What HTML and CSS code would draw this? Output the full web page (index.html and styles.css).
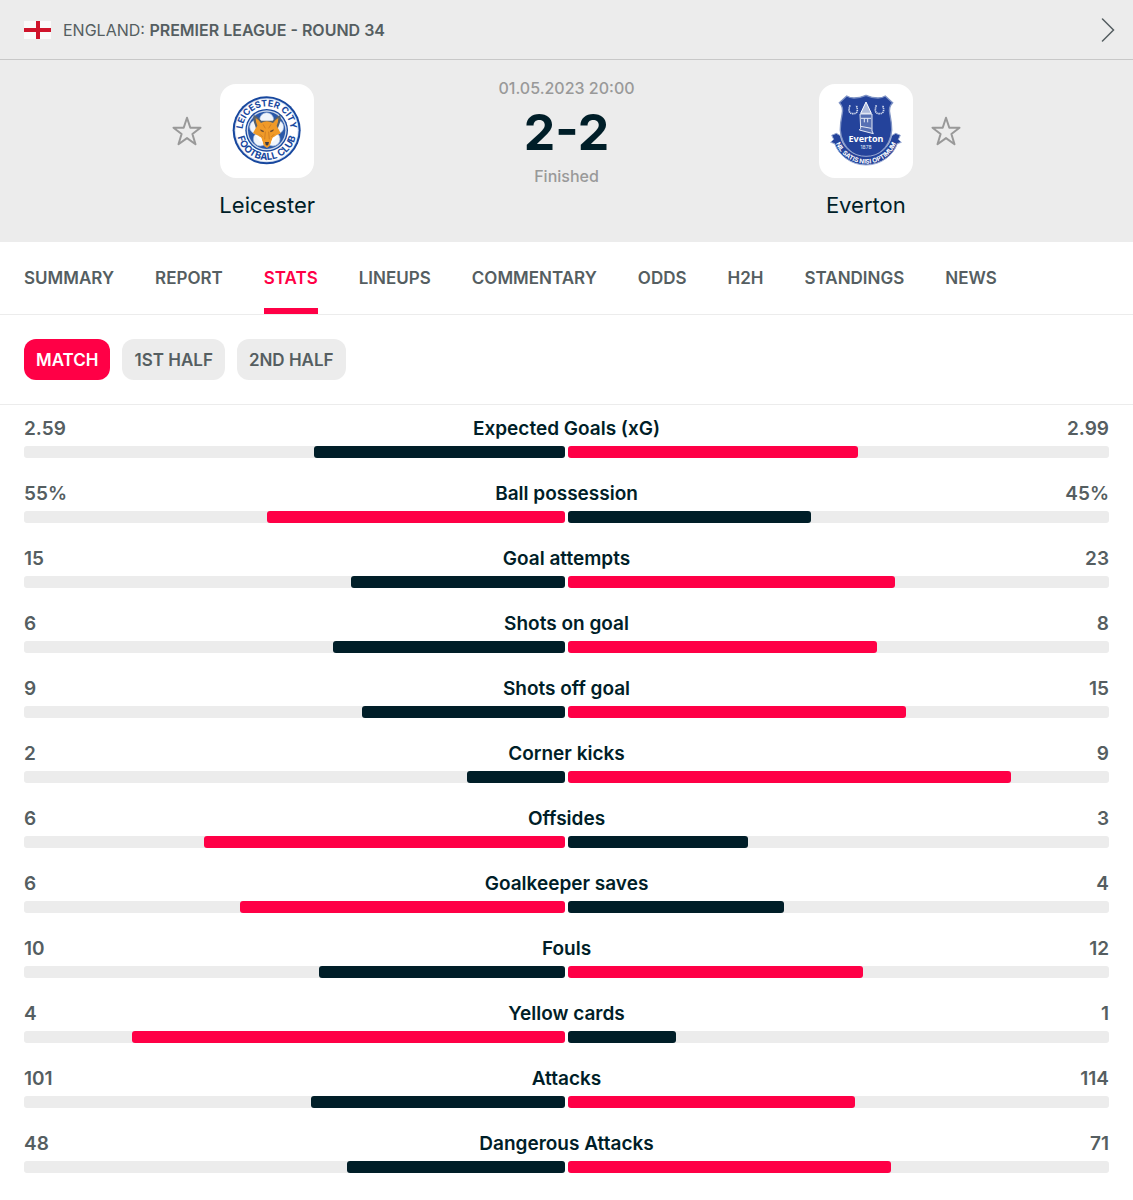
FILE: index.html
```html
<!DOCTYPE html>
<html lang="en">
<head>
<meta charset="utf-8">
<meta name="viewport" content="width=device-width, initial-scale=1">
<title>Leicester 2-2 Everton | Stats</title>
<link rel="stylesheet" href="styles.css">
</head>
<body>
<header class="league">
  <svg class="flag" viewBox="0 0 27 18" aria-hidden="true"><path fill="#fafafa" d="M0 0h27v18H0z"/><path fill="#cf142b" d="M12 0h4v18h-4zM0 7h27v4H0z"/></svg>
  <p class="league-name">ENGLAND: <a href="#league">PREMIER LEAGUE - ROUND 34</a></p>
  <button class="icon-button league-next" aria-label="Next">
    <svg class="chevron" viewBox="0 0 14 24" aria-hidden="true"><path d="M1.500 1l11 11-11 11"/></svg>
  </button>
</header>

<section class="match">
  <div class="team">
    <button class="icon-button" aria-label="Follow Leicester">
      <svg class="star" viewBox="0 0 30 30" aria-hidden="true"><path d="M15 1.800l3.300 9.900h10.200l-8.100 6.300 3.100 10.200-8.500-6.100-8.500 6.100L9.600 18 1.500 11.700h10.200z"/></svg>
    </button>
    <a class="crest" href="#leicester" aria-label="Leicester">
      <svg viewBox="0 0 282 282" aria-hidden="true">
        <defs>
          <path id="lei-top" d="M68 150V139a72 72 0 0 1 144 0V150"/>
          <path id="lei-bottom" d="M51 130V139a89 89 0 0 0 178 0V130"/>
        </defs>
        <circle cx="140" cy="139" r="102" fill="#17479e"/>
        <circle cx="140" cy="139" r="96" fill="#d5e0f2"/>
        <circle cx="140" cy="139" r="93" fill="#fff"/>
        <circle cx="140" cy="139" r="64" fill="#17479e"/>
        <circle cx="140" cy="139" r="60" fill="#c9d6ea"/>
        <circle cx="140" cy="139" r="56" fill="#2a58a8"/>
        <g fill="#f1f5fb" stroke="#9fb6dc" stroke-width="2">
          <circle cx="140" cy="107" r="21"/>
          <circle cx="170" cy="129" r="21"/>
          <circle cx="159" cy="165" r="21"/>
          <circle cx="121" cy="165" r="21"/>
          <circle cx="110" cy="129" r="21"/>
        </g>
        <path fill="#54616f" d="M101 93q14 5 23 17h34q10-12 23-17 3 17-4 31l-5 13H109l-4-13q-7-14-4-31z"/>
        <path fill="#f09a28" d="M107 102q9 5 16 15 17-10 36 0 7-10 16-15 0 13-5 24 8 13 12 22-15 5-23 13l-10 25-8 6-9-6-9-25q-8-8-24-13 4-10 13-23-5-10-5-23z"/>
        <path fill="#fff" d="M106 153l18 8 5 17q-14-8-23-25zm70 0l-18 8-6 17q14-8 24-25z"/>
        <path fill="#6a4a30" d="M121 136l11 5-2 4-8-4zm40 0l-11 5 2 4 8-4z"/>
        <path fill="#3d3e46" d="M135 174h12l-2 8-4 3-4-3z"/>
        <path fill="none" stroke="#c0701f" stroke-width="2" d="M136 143l-2 23m12-23l2 23M129 121l7 12m17-12l-7 12M120 151l8 8m34-8l-8 8"/>
        <text class="crest-ring"><textPath href="#lei-top" startOffset="50%">LEICESTER CITY</textPath></text>
        <text class="crest-ring crest-ring-large"><textPath href="#lei-bottom" startOffset="50%">FOOTBALL CLUB</textPath></text>
      </svg>
    </a>
    <a class="team-name" href="#leicester">Leicester</a>
  </div>

  <div class="result">
    <time class="muted" datetime="2023-05-01T20:00">01.05.2023 20:00</time>
    <strong class="score">2-2</strong>
    <span class="muted">Finished</span>
  </div>

  <div class="team team-away">
    <button class="icon-button" aria-label="Follow Everton">
      <svg class="star" viewBox="0 0 30 30" aria-hidden="true"><path d="M15 1.800l3.300 9.900h10.200l-8.100 6.300 3.100 10.200-8.500-6.100-8.500 6.100L9.600 18 1.500 11.700h10.200z"/></svg>
    </button>
    <a class="crest" href="#everton" aria-label="Everton">
      <svg viewBox="0 0 282 282" aria-hidden="true">
        <defs><path id="eve-ribbon" d="M46 165a98 98 0 0 0 190 0"/></defs>
        <path fill="#24439b" stroke="#8195c6" stroke-width="4" d="M83 36q10 6 22 6 18 0 36-8 18 8 36 8 12 0 22-6l22 20q-14 14-8 36l4 25q6 42-18 73-20 24-58 38-38-14-58-38-24-31-18-73l4-25q6-22-8-36z"/>
        <path fill="none" stroke="#d5ddef" stroke-width="5" stroke-dasharray="4 2" d="M93 64q-9 25 10 25 18 0 9-25M172 64q-9 25 9 25 19 0 10-25"/>
        <path fill="#aebbdd" stroke="#fff" stroke-width="3" d="M141 54l-16 34h32z"/>
        <path fill="#5770b3" stroke="#e4e9f5" stroke-width="3" d="M123 90h36v51l4 8-42-11 4-5z"/>
        <path fill="none" stroke="#e4e9f5" stroke-width="3" d="M126 103h30M125 127l32 6M136 103v12m10-12v12"/>
        <path fill="#24439b" stroke="#9aaad3" stroke-width="3" d="M38 154l14-6 12 7q5 27 26 44 22 18 51 18t51-18q21-17 26-44l12-7 14 6-6 12 9 9-12 4q-10 27-33 44-27 20-61 20t-61-20q-23-17-33-44l-12-4 9-9z"/>
        <text class="crest-name" x="141" y="173">Everton</text>
        <text class="crest-year" x="141" y="196">1878</text>
        <text class="crest-motto"><textPath href="#eve-ribbon" startOffset="50%">NIL SATIS NISI OPTIMUM</textPath></text>
      </svg>
    </a>
    <a class="team-name" href="#everton">Everton</a>
  </div>
</section>

<nav class="tabs" aria-label="Match sections">
  <a class="tab" href="#summary">SUMMARY</a>
  <a class="tab" href="#report">REPORT</a>
  <a class="tab tab-active" href="#stats" aria-current="page">STATS</a>
  <a class="tab" href="#lineups">LINEUPS</a>
  <a class="tab" href="#commentary">COMMENTARY</a>
  <a class="tab" href="#odds">ODDS</a>
  <a class="tab" href="#h2h">H2H</a>
  <a class="tab" href="#standings">STANDINGS</a>
  <a class="tab" href="#news">NEWS</a>
</nav>

<div class="periods">
  <button class="period period-active" aria-pressed="true">MATCH</button>
  <button class="period" aria-pressed="false">1ST HALF</button>
  <button class="period" aria-pressed="false">2ND HALF</button>
</div>

<main class="stats">
  <div class="stat">
    <div class="stat-text"><span>2.59</span><span class="stat-label">Expected Goals (xG)</span><span>2.99</span></div>
    <div class="bars"><div class="bar bar-home"><div class="fill" style="width:46.4%"></div></div><div class="bar"><div class="fill fill-lead" style="width:53.6%"></div></div></div>
  </div>
  <div class="stat">
    <div class="stat-text"><span>55%</span><span class="stat-label">Ball possession</span><span>45%</span></div>
    <div class="bars"><div class="bar bar-home"><div class="fill fill-lead" style="width:55%"></div></div><div class="bar"><div class="fill" style="width:45%"></div></div></div>
  </div>
  <div class="stat">
    <div class="stat-text"><span>15</span><span class="stat-label">Goal attempts</span><span>23</span></div>
    <div class="bars"><div class="bar bar-home"><div class="fill" style="width:39.5%"></div></div><div class="bar"><div class="fill fill-lead" style="width:60.5%"></div></div></div>
  </div>
  <div class="stat">
    <div class="stat-text"><span>6</span><span class="stat-label">Shots on goal</span><span>8</span></div>
    <div class="bars"><div class="bar bar-home"><div class="fill" style="width:42.9%"></div></div><div class="bar"><div class="fill fill-lead" style="width:57.1%"></div></div></div>
  </div>
  <div class="stat">
    <div class="stat-text"><span>9</span><span class="stat-label">Shots off goal</span><span>15</span></div>
    <div class="bars"><div class="bar bar-home"><div class="fill" style="width:37.5%"></div></div><div class="bar"><div class="fill fill-lead" style="width:62.5%"></div></div></div>
  </div>
  <div class="stat">
    <div class="stat-text"><span>2</span><span class="stat-label">Corner kicks</span><span>9</span></div>
    <div class="bars"><div class="bar bar-home"><div class="fill" style="width:18.2%"></div></div><div class="bar"><div class="fill fill-lead" style="width:81.8%"></div></div></div>
  </div>
  <div class="stat">
    <div class="stat-text"><span>6</span><span class="stat-label">Offsides</span><span>3</span></div>
    <div class="bars"><div class="bar bar-home"><div class="fill fill-lead" style="width:66.7%"></div></div><div class="bar"><div class="fill" style="width:33.3%"></div></div></div>
  </div>
  <div class="stat">
    <div class="stat-text"><span>6</span><span class="stat-label">Goalkeeper saves</span><span>4</span></div>
    <div class="bars"><div class="bar bar-home"><div class="fill fill-lead" style="width:60%"></div></div><div class="bar"><div class="fill" style="width:40%"></div></div></div>
  </div>
  <div class="stat">
    <div class="stat-text"><span>10</span><span class="stat-label">Fouls</span><span>12</span></div>
    <div class="bars"><div class="bar bar-home"><div class="fill" style="width:45.5%"></div></div><div class="bar"><div class="fill fill-lead" style="width:54.5%"></div></div></div>
  </div>
  <div class="stat">
    <div class="stat-text"><span>4</span><span class="stat-label">Yellow cards</span><span>1</span></div>
    <div class="bars"><div class="bar bar-home"><div class="fill fill-lead" style="width:80%"></div></div><div class="bar"><div class="fill" style="width:20%"></div></div></div>
  </div>
  <div class="stat">
    <div class="stat-text"><span>101</span><span class="stat-label">Attacks</span><span>114</span></div>
    <div class="bars"><div class="bar bar-home"><div class="fill" style="width:47%"></div></div><div class="bar"><div class="fill fill-lead" style="width:53%"></div></div></div>
  </div>
  <div class="stat">
    <div class="stat-text"><span>48</span><span class="stat-label">Dangerous Attacks</span><span>71</span></div>
    <div class="bars"><div class="bar bar-home"><div class="fill" style="width:40.3%"></div></div><div class="bar"><div class="fill fill-lead" style="width:59.7%"></div></div></div>
  </div>
</main>
</body>
</html>
```

FILE: styles.css
```css
* { box-sizing: border-box; }

body {
  margin: 0;
  background: #fff;
  color: #555e61;
  font-family: Inter, "Liberation Sans", sans-serif;
  font-size: 16px;
  line-height: 20px;
}

a { color: inherit; text-decoration: none; }

.icon-button {
  display: flex;
  padding: 0;
  border: 0;
  background: none;
  cursor: pointer;
}

/* League bar */
.league {
  display: flex;
  align-items: center;
  gap: 12px;
  height: 60px;
  padding: 0 18px 0 24px;
  background: #ececec;
  border-bottom: 1px solid #c8c8c8;
}
.flag { width: 27px; height: 18px; }
.league-name { margin: 0; }
.league-name a { font-weight: 600; }
.league-next { margin-left: auto; }
.chevron {
  width: 14px;
  height: 24px;
  fill: none;
  stroke: #555e61;
  stroke-width: 1.500;
  stroke-linecap: round;
}

/* Teams and score */
.match {
  display: flex;
  justify-content: space-between;
  align-items: flex-start;
  padding: 18px 15.2% 23px;
  background: #ececec;
}
.team {
  display: grid;
  grid-template-columns: 30px 94px;
  column-gap: 18px;
  row-gap: 13px;
  align-items: center;
  padding-top: 6px;
}
.team-away { grid-template-columns: 94px 30px; }
.team-away .icon-button { grid-column: 2; grid-row: 1; }
.team-away .crest { grid-column: 1; grid-row: 1; }
.star {
  width: 30px;
  height: 30px;
  fill: none;
  stroke: #999;
  stroke-width: 2;
  stroke-linejoin: round;
}
.crest {
  display: flex;
  height: 94px;
  border-radius: 16px;
  background: #fff;
}
.team-name {
  grid-column: 2;
  justify-self: center;
  color: #001e28;
  font-size: 22px;
  line-height: 28px;
  white-space: nowrap;
}
.team-away .team-name { grid-column: 1; }

.crest-ring { fill: #17479e; font-size: 27px; font-weight: 700; text-anchor: middle; }
.crest-ring-large { font-size: 29px; }
.crest-name { fill: #fff; font-family: "Noto Sans", sans-serif; font-size: 27px; font-weight: 700; text-anchor: middle; }
.crest-year { fill: #dfe5f3; font-size: 15px; text-anchor: middle; }
.crest-motto { fill: #fff; font-size: 19px; font-weight: 700; text-anchor: middle; }

.result {
  display: flex;
  flex-direction: column;
  align-items: center;
  gap: 10px;
}
.muted { color: #999; font-weight: 500; }
.score { color: #001e28; font-size: 50px; font-weight: 700; line-height: 48px; }

/* Section tabs */
.tabs {
  display: flex;
  gap: 41px;
  padding: 0 24px;
  border-bottom: 1px solid #ececec;
}
.tab {
  padding: 26px 0 20px;
  border-bottom: 6px solid transparent;
  font-size: 17px;
  font-weight: 600;
}
.tab-active {
  color: #ff0046;
  background: linear-gradient(#ff0046, #ff0046) bottom / 100% 6px no-repeat border-box;
}

/* Period filter */
.periods {
  display: flex;
  gap: 12px;
  padding: 24px;
  border-bottom: 1px solid #ececec;
}
.period {
  height: 41px;
  padding: 0 12px;
  border: 0;
  border-radius: 12px;
  background: #ececec;
  color: #555e61;
  font: inherit;
  font-size: 17px;
  font-weight: 600;
  cursor: pointer;
}
.period-active { background: #ff0046; color: #fff; }

/* Statistics */
.stats {
  display: grid;
  gap: 24px;
  padding: 12px 24px 27px;
}
.stat-text {
  display: grid;
  grid-template-columns: 1fr auto 1fr;
  margin-bottom: 5px;
  font-size: 19px;
  font-weight: 600;
  line-height: 24px;
}
.stat-text :last-child { text-align: right; }
.stat-label { color: #001e28; }
.bars {
  display: grid;
  grid-template-columns: 1fr 1fr;
  gap: 3px;
}
.bar {
  display: flex;
  height: 12px;
  border-radius: 3px;
  background: #ececec;
}
.bar-home { justify-content: flex-end; }
.fill { border-radius: 3px; background: #001e28; }
.fill-lead { background: #ff0046; }
```
